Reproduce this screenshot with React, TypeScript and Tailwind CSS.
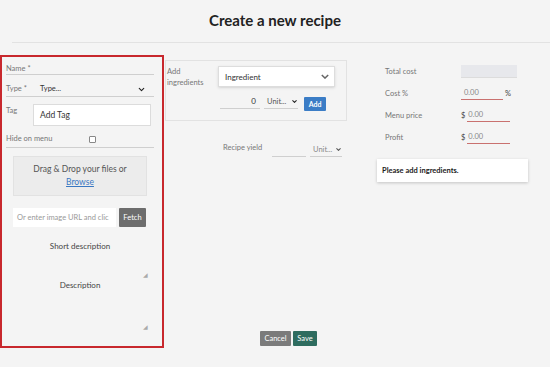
import React from 'react';
import { ChevronDown } from 'lucide-react';

const Chevron = ({ className = '' }: { className?: string }) => (
  <svg viewBox="0 0 10 6" className={className} fill="none" stroke="currentColor" strokeWidth="1.8">
    <path d="M1 1l4 4 4-4" />
  </svg>
);

const App = () => {
  return (
    <div className="w-[550px] h-[367px] bg-[#f4f4f4] overflow-hidden text-[#333] font-['Lato','Noto_Sans',sans-serif]">
      <div className="h-[42px] flex items-center justify-center">
        <h1 className="text-[15px] font-bold text-[#222] mt-[-2px]">Create a new recipe</h1>
      </div>
      <div className="ml-[12px] h-px bg-[#e2e2e2]" />

      <div className="flex mt-[12px]">
        {/* left form */}
        <div className="w-[164px] h-[293px] border-2 border-[#c8282d] px-[4px] pt-[6px] text-[7.5px] text-[#777]">
          <div className="border-b border-[#cfcfcf] pb-[1px] w-[148px] h-[12px]">Name *</div>

          <div className="mt-[9px] flex items-center border-b border-[#cfcfcf] w-[148px] h-[13px] pb-[2px]">
            <span className="w-[34px]">Type *</span>
            <span className="text-[#333]">Type...</span>
            <ChevronDown className="ml-auto mr-[8px] w-[9px] h-[9px] text-[#222]" strokeWidth={3} />
          </div>

          <div className="mt-[7px] flex items-start">
            <span className="w-[27px] pt-[1px]">Tag</span>
            <div className="w-[118px] h-[22px] bg-white border border-[#dcdcdc] flex items-center pl-[6px] text-[8.5px] text-[#333]">
              Add Tag
            </div>
          </div>

          <div className="mt-[7px] flex items-center border-b border-[#cfcfcf] w-[148px] h-[15px] pb-[2px]">
            <span className="w-[83px]">Hide on menu</span>
            <span className="w-[7px] h-[7px] border border-[#888] rounded-[1px] bg-white" />
          </div>

          <div className="ml-[7px] mt-[8px] w-[134px] h-[40px] bg-[#ececec] border border-[#e2e2e2] flex flex-col items-center justify-center text-[8.5px] text-[#555] leading-[13px]">
            <span>Drag &amp; Drop your files or</span>
            <span className="text-[#3a78c2] underline">Browse</span>
          </div>

          <div className="ml-[7px] mt-[12px] flex">
            <div className="w-[103px] h-[19px] bg-white flex items-center pl-[4px] text-[7.5px] text-[#999] whitespace-nowrap overflow-hidden">
              Or enter image URL and clic
            </div>
            <div className="ml-[3px] w-[27px] h-[19px] bg-[#6d6d6d] text-white text-[7.5px] flex items-center justify-center rounded-[1px]">
              Fetch
            </div>
          </div>

          <div className="mt-[13px] text-center text-[8px] text-[#444] w-[148px]">Short description</div>
          <div className="w-[148px] h-[28px] relative">
            <span className="absolute right-[6px] bottom-[1px] text-[6px] text-[#aaa]">◢</span>
          </div>
          <div className="mt-[-1px] text-center text-[8px] text-[#444] w-[148px]">Description</div>
          <div className="w-[148px] h-[43px] relative">
            <span className="absolute right-[6px] bottom-[3px] text-[6px] text-[#aaa]">◢</span>
          </div>
        </div>

        {/* middle */}
        <div className="ml-[1px] w-[212px] text-[7.5px] text-[#777]">
          <div className="mt-[5px] w-[182px] h-[61px] border border-[#e2e2e2] flex pt-[5px]">
            <div className="w-[52px] pl-[1px] leading-[11px]">
              Add
              <br />
              ingredients
            </div>
            <div>
              <div className="w-[117px] h-[21px] bg-white border border-[#ddd] shadow-sm flex items-center pl-[6px] text-[8px] text-[#333]">
                Ingredient
                <Chevron className="ml-auto mr-[5px] w-[8px] h-[5px] text-[#666]" />
              </div>
              <div className="mt-[8px] flex items-end">
                <div className="w-[40px] ml-[2px] border-b border-[#cfcfcf] text-right pr-[4px] text-[8px] text-[#333] pb-[1px]">0</div>
                <div className="ml-[4px] w-[34px] border-b border-[#cfcfcf] flex items-center pl-[3px] text-[#555] pb-[1px]">
                  Unit...
                  <ChevronDown className="ml-auto w-[7px] h-[7px] text-[#222]" strokeWidth={3.5} />
                </div>
                <div className="ml-[6px] mb-[-2px] w-[22px] h-[14px] bg-[#3b7dc6] text-white font-bold text-[7px] flex items-center justify-center rounded-[1px]">
                  Add
                </div>
              </div>
            </div>
          </div>

          <div className="mt-[21px] flex items-end">
            <span className="ml-[58px] w-[49px] pb-[4px]">Recipe yield</span>
            <div className="w-[34px] border-b border-[#cfcfcf] h-[8px]" />
            <div className="ml-[4px] w-[32px] border-b border-[#cfcfcf] flex items-center pl-[3px] text-[#888] pb-[1px]">
              Unit...
              <ChevronDown className="ml-auto w-[7px] h-[7px] text-[#555]" strokeWidth={3.5} />
            </div>
          </div>

          <div className="mt-[174px] ml-[95px] flex gap-[2px]">
            <div className="w-[31px] h-[15px] bg-[#7b7b7b] text-white text-[7.5px] flex items-center justify-center rounded-[1px]">Cancel</div>
            <div className="w-[24px] h-[15px] bg-[#2e6c5f] text-white text-[7.5px] flex items-center justify-center rounded-[1px]">Save</div>
          </div>
        </div>

        {/* right */}
        <div className="w-[152px] text-[7.5px] text-[#777]">
          <div className="mt-[10px] pl-[8px] flex items-center h-[13px]">
            <span className="w-[76px]">Total cost</span>
            <div className="w-[56px] h-[13px] bg-[#e7e8ec] border-b border-[#dcdcdc]" />
          </div>
          <div className="mt-[9px] pl-[8px] flex items-end h-[13px]">
            <span className="w-[76px] pb-[1px]">Cost %</span>
            <div className="w-[42px] border-b border-[#c9716f] pl-[3px] text-[#888] pb-[1px]">0.00</div>
            <span className="ml-[2px] pb-[1px] text-[#444]">%</span>
          </div>
          <div className="mt-[9px] pl-[8px] flex items-end h-[13px]">
            <span className="w-[76px] pb-[1px]">Menu price</span>
            <span className="text-[#444] pb-[1px]">$</span>
            <div className="ml-[2px] w-[43px] border-b border-[#c9716f] pl-[1px] text-[#888] pb-[1px]">0.00</div>
          </div>
          <div className="mt-[9px] pl-[8px] flex items-end h-[13px]">
            <span className="w-[76px] pb-[1px]">Profit</span>
            <span className="text-[#444] pb-[1px]">$</span>
            <div className="ml-[2px] w-[43px] border-b border-[#c9716f] pl-[1px] text-[#888] pb-[1px]">0.00</div>
          </div>
          <div className="mt-[15px] w-[151px] h-[23px] bg-white shadow-[0_1px_3px_rgba(0,0,0,0.2)] flex items-center pl-[5px] text-[7.5px] font-bold text-[#222]">
            Please add ingredients.
          </div>
        </div>
      </div>
    </div>
  );
};

export default App;
